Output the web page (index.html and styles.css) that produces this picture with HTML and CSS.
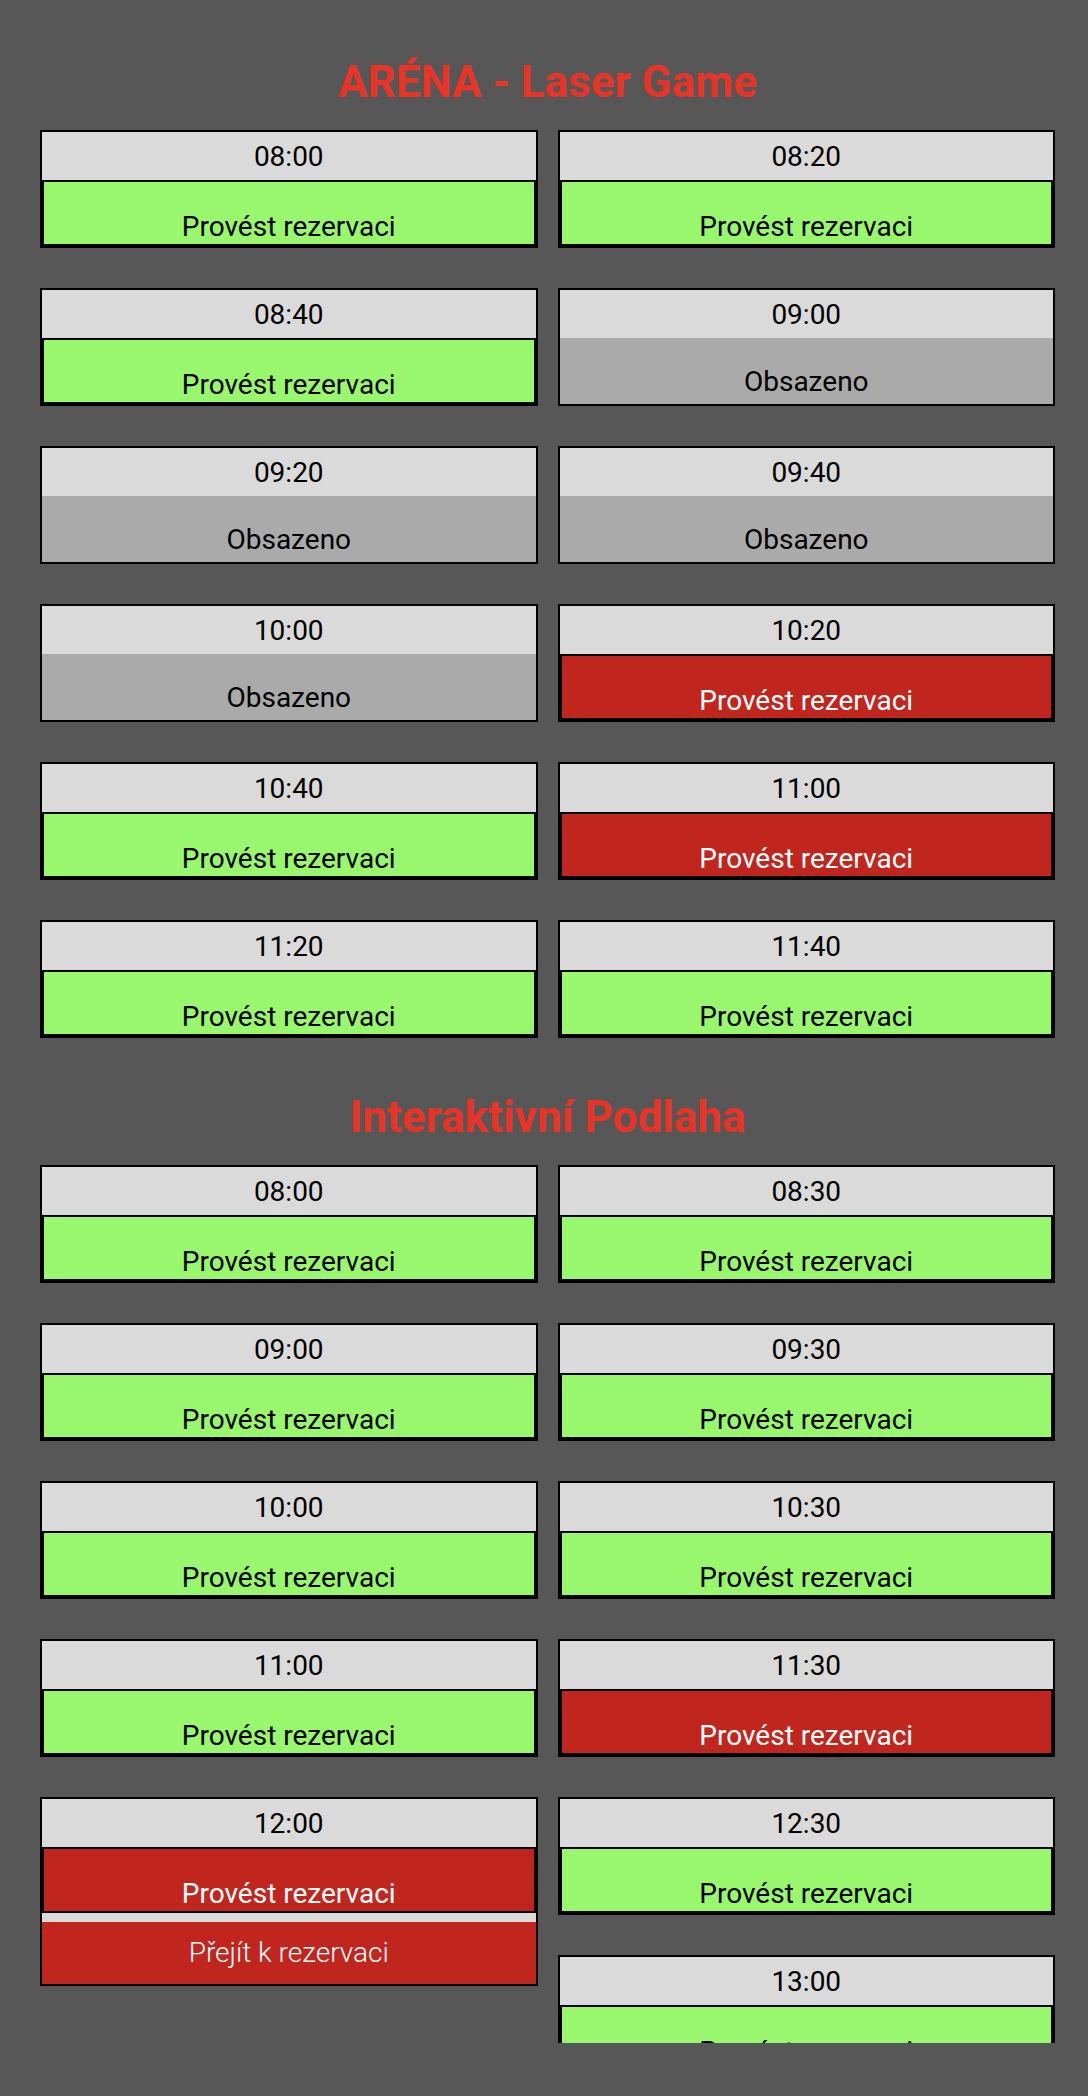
FILE: index.html
```html
<!DOCTYPE html>
<html lang="cs">
<head>
<meta charset="utf-8">
<title>Rezervace</title>
<link rel="stylesheet" href="styles.css">
</head>
<body>
<div class="wrap">
  <section class="area">
    <h2 class="area-title">ARÉNA - Laser Game</h2>
    <div class="slots">
      <div class="col">
        <div class="slot"><div class="time">08:00</div><button class="act free">Provést rezervaci</button></div>
        <div class="slot"><div class="time">08:40</div><button class="act free">Provést rezervaci</button></div>
        <div class="slot"><div class="time">09:20</div><div class="act taken">Obsazeno</div></div>
        <div class="slot"><div class="time">10:00</div><div class="act taken">Obsazeno</div></div>
        <div class="slot"><div class="time">10:40</div><button class="act free">Provést rezervaci</button></div>
        <div class="slot"><div class="time">11:20</div><button class="act free">Provést rezervaci</button></div>
      </div>
      <div class="col">
        <div class="slot"><div class="time">08:20</div><button class="act free">Provést rezervaci</button></div>
        <div class="slot"><div class="time">09:00</div><div class="act taken">Obsazeno</div></div>
        <div class="slot"><div class="time">09:40</div><div class="act taken">Obsazeno</div></div>
        <div class="slot"><div class="time">10:20</div><button class="act selected">Provést rezervaci</button></div>
        <div class="slot"><div class="time">11:00</div><button class="act selected">Provést rezervaci</button></div>
        <div class="slot"><div class="time">11:40</div><button class="act free">Provést rezervaci</button></div>
      </div>
    </div>
  </section>
  <section class="area area-next">
    <h2 class="area-title">Interaktivní Podlaha</h2>
    <div class="slots">
      <div class="col">
        <div class="slot"><div class="time">08:00</div><button class="act free">Provést rezervaci</button></div>
        <div class="slot"><div class="time">09:00</div><button class="act free">Provést rezervaci</button></div>
        <div class="slot"><div class="time">10:00</div><button class="act free">Provést rezervaci</button></div>
        <div class="slot"><div class="time">11:00</div><button class="act free">Provést rezervaci</button></div>
        <div class="slot"><div class="time">12:00</div><button class="act selected">Provést rezervaci</button><a class="go" href="#">Přejít k rezervaci</a></div>
      </div>
      <div class="col">
        <div class="slot"><div class="time">08:30</div><button class="act free">Provést rezervaci</button></div>
        <div class="slot"><div class="time">09:30</div><button class="act free">Provést rezervaci</button></div>
        <div class="slot"><div class="time">10:30</div><button class="act free">Provést rezervaci</button></div>
        <div class="slot"><div class="time">11:30</div><button class="act selected">Provést rezervaci</button></div>
        <div class="slot"><div class="time">12:30</div><button class="act free">Provést rezervaci</button></div>
        <div class="slot"><div class="time">13:00</div><button class="act free">Provést rezervaci</button></div>
      </div>
    </div>
  </section>
</div>
</body>
</html>
```

FILE: styles.css
```css
html, body {
  margin: 0;
  padding: 0;
}
body {
  background: #575757;
  font-family: Roboto, "Liberation Sans", Arial, sans-serif;
  min-height: 2096px;
  color: #000;
}
.wrap {
  height: 2043px;
  overflow: hidden;
  box-sizing: border-box;
  padding: 56px 33px 0 40px;
}
.area-title {
  margin: 0 0 22px;
  font-size: 44px;
  line-height: 52px;
  font-weight: 700;
  color: #e83426;
  text-align: center;
}
.area-next {
  margin-top: 53px;
}
.slots {
  display: flex;
  gap: 20px;
  align-items: flex-start;
}
.col {
  flex: 1 1 0;
  display: flex;
  flex-direction: column;
  gap: 40px;
  min-width: 0;
}
.slot {
  border: 2px solid #000;
  background: #dadada;
}
.time {
  height: 48px;
  line-height: 49px;
  font-size: 28px;
  text-align: center;
}
.act {
  display: block;
  width: 100%;
  height: 66px;
  box-sizing: border-box;
  margin: 0;
  padding: 27px 0 0;
  font-family: inherit;
  font-size: 28px;
  line-height: 33px;
  text-align: center;
  color: #000;
  overflow: hidden;
}
button.act {
  border: 2px solid #000;
  cursor: pointer;
  border-radius: 0;
  appearance: none;
}
.free {
  background: #98f76c;
}
.selected {
  background: #c0261e;
  color: #fff;
}
.taken {
  background: #aaaaaa;
}
.go {
  display: block;
  margin-top: 9px;
  height: 62px;
  line-height: 62px;
  background: #c0261e;
  color: #fff;
  font-size: 28px;
  font-weight: 300;
  text-align: center;
  text-decoration: none;
}
```
